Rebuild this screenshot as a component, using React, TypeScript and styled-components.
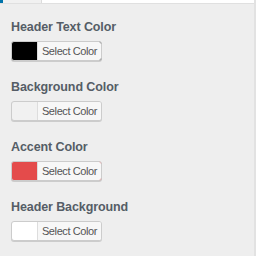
import React from "react";
import styled, { createGlobalStyle } from "styled-components";

const Global = createGlobalStyle`
  html, body { margin: 0; padding: 0; background: #eeeeee; }
  body { font-family: "Liberation Sans", Arial, sans-serif; }
`;

const Panel = styled.div`
  width: 256px;
  height: 256px;
  background: #eeeeee;
  display: flex;
  flex-direction: column;
  box-sizing: border-box;
  border-right: 2px solid #e2e2e2;
  overflow: hidden;
`;

const TabBar = styled.div`
  display: flex;
  height: 3px;
  border-bottom: 1px solid #e0e0e0;
  flex-shrink: 0;
`;

const ActiveTab = styled.div`
  width: 38px;
  background: #f1f1f1;
  border-left: 3px solid #0073aa;
  border-right: 1px solid #dcdcdc;
`;

const TabRest = styled.div`
  flex: 1;
  background: #ffffff;
`;

const List = styled.div`
  display: flex;
  flex-direction: column;
  padding: 15px 0 0 11px;
  gap: 18px;
`;

const Field = styled.div`
  display: flex;
  flex-direction: column;
  gap: 6px;
`;

const Label = styled.div`
  font-size: 12.5px;
  font-weight: 700;
  letter-spacing: -0.1px;
  color: #555d66;
  line-height: 16px;
`;

const ColorButton = styled.div<{ $color: string }>`
  display: flex;
  width: 91px;
  height: 20px;
  box-sizing: border-box;
  border: 1px solid #cccccc;
  border-radius: 3px;
  box-shadow: 0 1px 0 #cccccc;
  background: ${(p) => p.$color};
  overflow: hidden;
`;

const Swatch = styled.div`
  width: 25px;
  flex-shrink: 0;
`;

const ButtonText = styled.div`
  flex: 1;
  background: #f7f7f7;
  border-left: 1px solid #dddddd;
  color: #555555;
  font-size: 11px;
  letter-spacing: -0.4px;
  line-height: 18px;
  text-align: center;
`;

const fields = [
  { label: "Header Text Color", color: "#000000" },
  { label: "Background Color", color: "#f1f1f1" },
  { label: "Accent Color", color: "#e44b4b" },
  { label: "Header Background", color: "#ffffff" },
];

export default function App() {
  return (
    <>
      <Global />
      <Panel>
        <TabBar>
          <ActiveTab />
          <TabRest />
        </TabBar>
        <List>
          {fields.map((f) => (
            <Field key={f.label}>
              <Label>{f.label}</Label>
              <ColorButton $color={f.color}>
                <Swatch />
                <ButtonText>Select Color</ButtonText>
              </ColorButton>
            </Field>
          ))}
        </List>
      </Panel>
    </>
  );
}
